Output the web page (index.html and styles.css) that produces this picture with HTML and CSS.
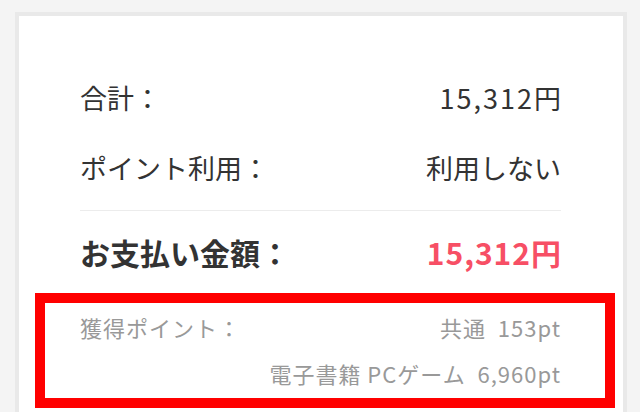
FILE: index.html
```html
<!DOCTYPE html>
<html>
    <head>
        <meta charset="utf-8">
        <title>お支払い金額</title>
        <link rel="stylesheet" href="styles.css">
    </head>
    <body>
        <div class="card">
            <div class="row">
                <span>合計：</span>
                <span class="num">15,312円</span>
            </div>
            <div class="row">
                <span>ポイント利用：</span>
                <span>利用しない</span>
            </div>
            <div class="line"></div>
            <div class="row total">
                <span>お支払い金額：</span>
                <span class="price">15,312円</span>
            </div>
            <div class="points">
                <div class="row small">
                    <span>獲得ポイント：</span>
                    <span>共通&nbsp; 153pt</span>
                </div>
                <div class="row small end">
                    <span>電子書籍&nbsp;PCゲーム&nbsp; 6,960pt</span>
                </div>
            </div>
        </div>
    </body>
</html>
```

FILE: styles.css
```css
body{
    margin: 0;
    padding: 12px 0 0 15px;
    background-color: #f4f4f4;
    font-family: "Noto Sans CJK JP", "Noto Sans", sans-serif;
    color: #333;
}

.card{
    width: 612px;
    height: 420px;
    border: 4px solid #e9e9e9;
    border-bottom: none;
    background-color: #fff;
    padding: 46px 62px 0 61px;
    box-sizing: border-box;
}

.row{
    display: flex;
    justify-content: space-between;
    align-items: center;
    height: 70px;
    font-size: 27px;
    white-space: nowrap;
}

.num{
    letter-spacing: 2px;
    margin-right: -2px;
}

.line{
    margin-top: 8px;
    height: 1px;
    background-color: #ececec;
}

.total{
    height: 82px;
    font-size: 30px;
    font-weight: bold;
}

.price{
    color: #f74f65;
    letter-spacing: 1px;
    margin-right: -1px;
}

.points{
    margin: 0 -54px 0 -45px;
    padding: 1px 45px 2px 35px;
    border: 10px solid #ff0000;
}

.small{
    height: 46px;
    font-size: 22px;
    color: #999;
    letter-spacing: 1px;
}

.small span{
    margin-right: -1px;
}

.end{
    justify-content: flex-end;
}
```
